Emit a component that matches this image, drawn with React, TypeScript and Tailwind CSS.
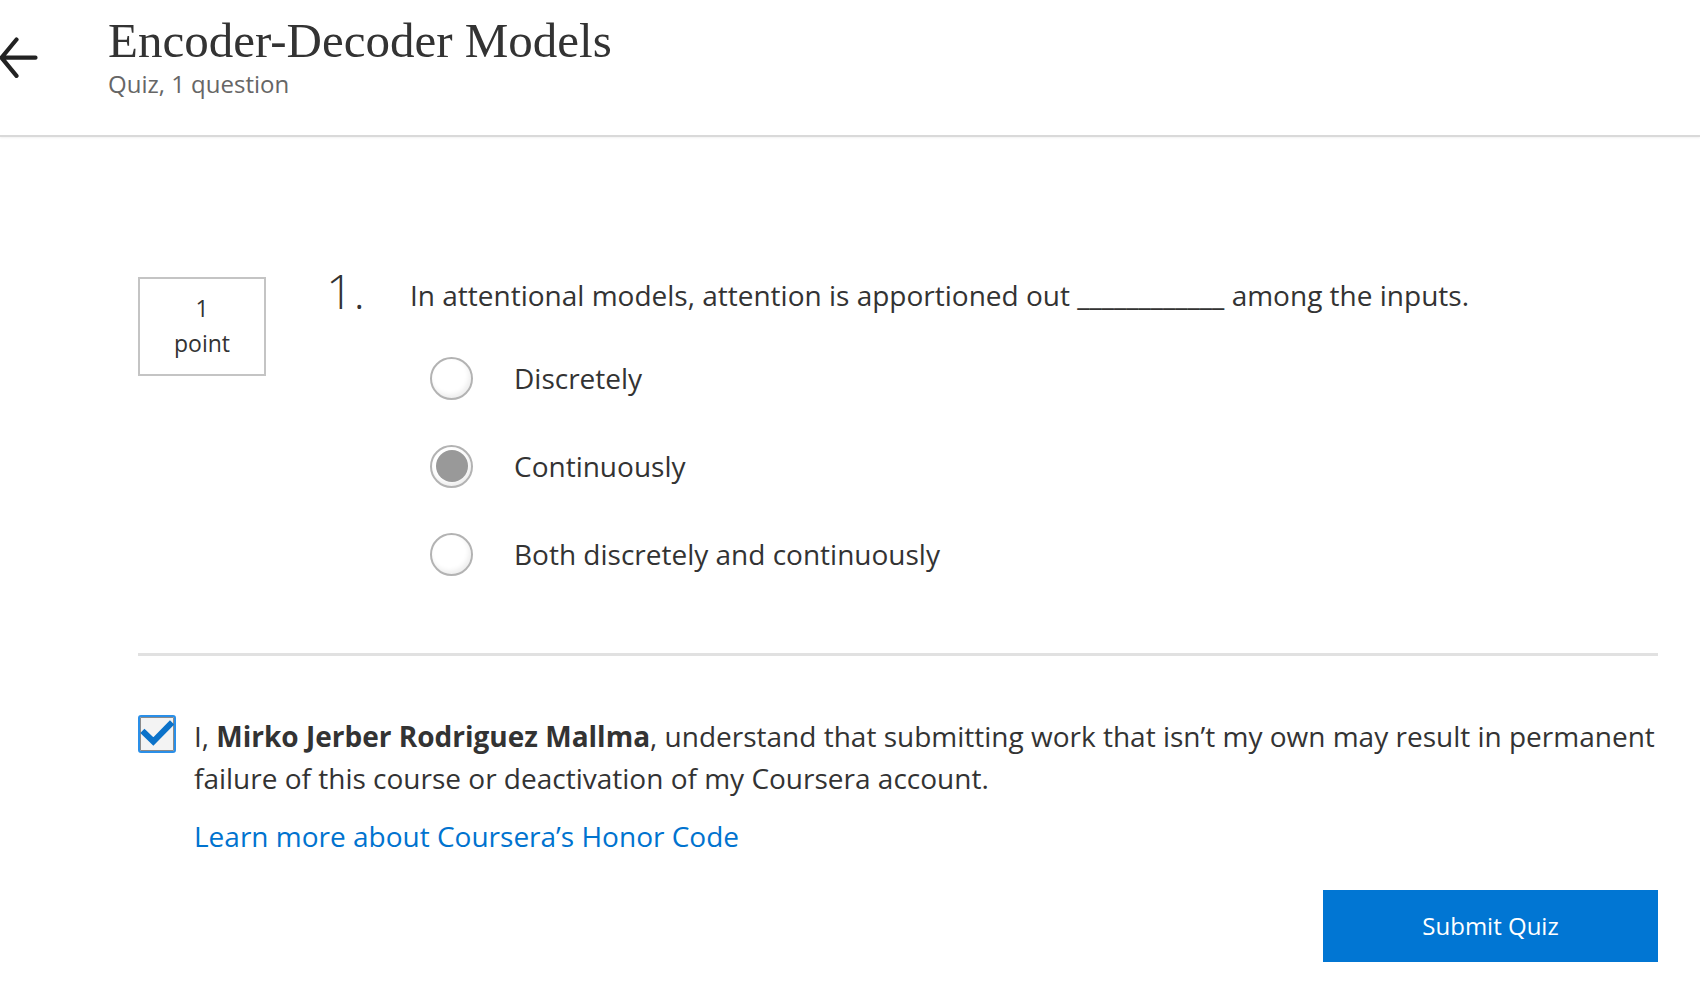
const options = [
  { label: 'Discretely', checked: false },
  { label: 'Continuously', checked: true },
  { label: 'Both discretely and continuously', checked: false },
];

function BackArrow() {
  return (
    <svg width="40" height="42" viewBox="0 0 40 42" fill="none" className="mt-[37px] shrink-0">
      <path
        d="M16.5 2.5 L1.5 20.7 L16.5 38.9 M1.5 20.7 H35.5"
        stroke="#222"
        strokeWidth="4.2"
        strokeLinecap="round"
        strokeLinejoin="round"
      />
    </svg>
  );
}

function Radio({ checked }: { checked: boolean }) {
  return (
    <span className="flex h-[43px] w-[43px] shrink-0 items-center justify-center rounded-full border-2 border-[#b3b3b3] bg-white shadow-[inset_-2px_-3px_5px_rgba(0,0,0,0.07)]">
      {checked && <span className="h-[32px] w-[32px] rounded-full bg-[#999999]" />}
    </span>
  );
}

function Checkbox() {
  return (
    <span className="flex h-[38px] w-[38px] shrink-0 items-center justify-center rounded-[3px] border-2 border-[#2a8fe8] bg-[#f3f3f3] shadow-[inset_0_0_0_1px_#8a8a8a]">
      <svg width="34" height="34" viewBox="0 0 34 34" fill="none">
        <path d="M4.5 16 L13.3 24.5 L30 7.5" stroke="#0b72c9" strokeWidth="6" strokeLinecap="square" />
      </svg>
    </span>
  );
}

export default function App() {
  return (
    <div className="min-h-screen bg-white text-[#333333] font-['Open_Sans',sans-serif]">
      {/* header strip: back arrow + quiz title */}
      <header className="flex h-[137px] items-start border-b-2 border-[#d9d9d9] shadow-[0_1px_2px_rgba(0,0,0,0.06)]">
        <BackArrow />
        <div className="ml-[68px] pt-[13px]">
          <h1 className="text-[49px] leading-[56px] font-normal text-[#333333] font-['Liberation_Serif',serif]">
            Encoder-Decoder Models
          </h1>
          <div className="text-[24px] leading-[30px] text-[#666666]">Quiz, 1 question</div>
        </div>
      </header>

      <main className="pl-[138px] pr-[42px] pt-[140px]">
        <div className="flex items-start">
          <div className="flex h-[99px] w-[128px] shrink-0 flex-col items-center justify-center border-2 border-[#c4c4c4] pb-[2px] text-[23px] leading-[35px]">
            <span>1</span>
            <span>point</span>
          </div>
          <div className="ml-[60px] w-[84px] shrink-0 text-[48px] leading-[28px] font-light text-[#333333]">1.</div>
          <div className="flex-1">
            <p className="text-[28px] leading-[36px]">
              In attentional models, attention is apportioned out ____________ among the inputs.
            </p>
            <div className="mt-[21px]">
              {options.map((o) => (
                <div key={o.label} className="flex h-[88px] items-center pl-[20px]">
                  <Radio checked={o.checked} />
                  <span className="ml-[41px] text-[28px] leading-[36px]">{o.label}</span>
                </div>
              ))}
            </div>
          </div>
        </div>

        <div className="mt-[55px] h-[3px] bg-[#e1e1e1]" />

        <div className="mt-[59px] flex items-start">
          <Checkbox />
          <div className="ml-[18px] flex-1 text-[28px] leading-[42px]">
            <p>
              I, <strong className="font-bold">Mirko Jerber Rodriguez Mallma</strong>, understand that submitting work
              that isn’t my own may result in permanent failure of this course or deactivation of my Coursera account.
            </p>
            <a href="#" className="mt-[16px] block text-[#0073cf]">
              Learn more about Coursera’s Honor Code
            </a>
          </div>
        </div>

        <div className="mt-[33px] flex justify-end">
          <button className="h-[72px] w-[335px] bg-[#0176d3] text-[24px] text-white">Submit Quiz</button>
        </div>
      </main>
    </div>
  );
}
